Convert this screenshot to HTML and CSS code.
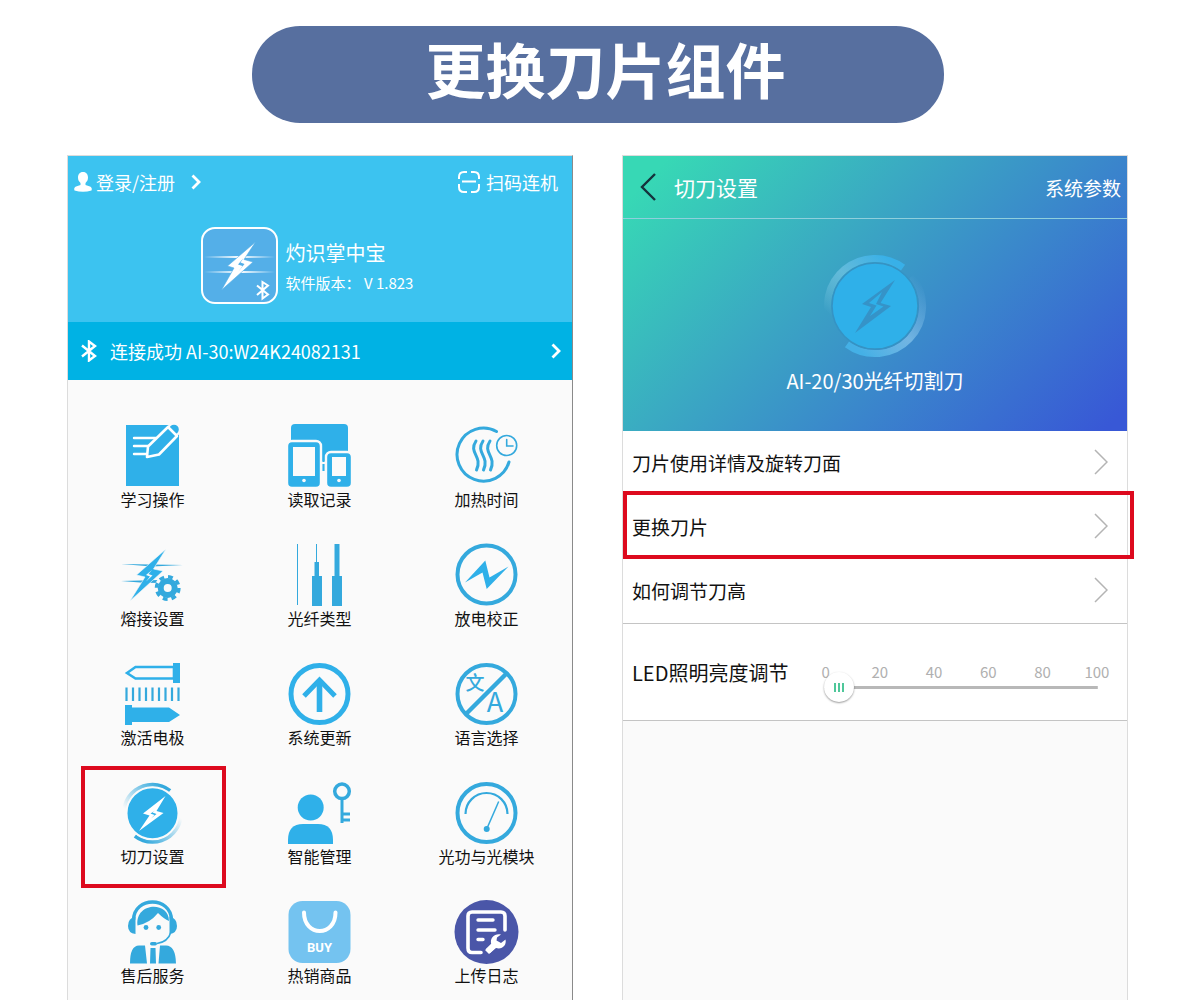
FILE: index.html
```html
<!DOCTYPE html>
<html lang="zh-CN">
<head>
  <meta charset="UTF-8" />
  <meta name="viewport" content="width=device-width, initial-scale=1.0" />
  <title>更换刀片组件</title>
  <link rel="stylesheet" href="styles.css">
</head>
<body>
  <h1 class="banner">更换刀片组件</h1>

  <main class="phones">
    <!-- Home screen -->
    <section class="phone home">
      <header class="home-head">
        <div class="top-bar">
          <button class="link-btn login">
            <svg width="18" height="20" viewBox="0 0 18 20"><path d="M9 0C5.500 0 4 2.500 4 5.500C4 8 5 9.500 6.500 11V13L2 14.500C0 15.500 0 17 .5 18.500Q9 21 17.500 18.500C18 17 18 15.500 16 14.500L11.500 13V11C13 9.500 14 8 14 5.500C14 2.500 12.500 0 9 0Z" fill="#fff"/></svg>
            <span>登录/注册</span>
            <svg class="login-arrow" width="10" height="16" viewBox="0 0 10 16"><path d="M1.500 1.500L8 8L1.500 14.500" fill="none" stroke="#fff" stroke-width="2.800"/></svg>
          </button>
          <button class="link-btn">
            <svg width="22" height="22" viewBox="0 0 22 22" fill="none" stroke="#fff" stroke-width="2"><path d="M1 8V6Q1 1 6 1H9M13 1H16Q21 1 21 6V8M21 13V16Q21 21 16 21H13M9 21H6Q1 21 1 16V13M4 10.500H18"/></svg>
            <span>扫码连机</span>
          </button>
        </div>

        <div class="app-info">
          <svg class="app-logo" width="77" height="77" viewBox="0 0 77 77">
            <defs>
              <linearGradient id="fade"><stop offset="0" stop-color="#fff" stop-opacity="0"/><stop offset=".5" stop-color="#fff"/><stop offset="1" stop-color="#fff" stop-opacity="0"/></linearGradient>
            </defs>
            <rect x="1" y="1" width="75" height="75" rx="13" fill="#54afe8" stroke="#fff" stroke-width="2"/>
            <rect x="3" y="29" width="71" height="2" fill="url(#fade)"/>
            <rect x="3" y="44" width="71" height="2" fill="url(#fade)"/>
            <path d="M54.500 15L26.500 39L33 41L20.500 63L52 35L43 32.500Z" fill="#fff" stroke="#54afe8" stroke-width=".6"/>
            <path d="M42.500 31L37 37.500L41.500 39L37 45L43.500 37L39.500 35.500Z" fill="#54afe8"/>
            <path d="M56 58.500L67 67.500L61.500 71.500V55L67 58.500L56 68" fill="none" stroke="#fff" stroke-width="2"/>
          </svg>
          <div class="app-text">
            <h2 class="app-name">灼识掌中宝</h2>
            <p class="app-version">软件版本： V 1.823</p>
          </div>
        </div>
      </header>

      <button class="connect-bar">
        <svg width="16" height="22" viewBox="0 0 16 22"><path d="M1 5.500L14 16L8 20.500V1.500L14 6L1 16.500" fill="none" stroke="#fff" stroke-width="2.400"/></svg>
        <span>连接成功 AI-30:W24K24082131</span>
        <svg class="connect-arrow" width="10" height="16" viewBox="0 0 10 16"><path d="M1.500 1.500L8 8L1.500 14.500" fill="none" stroke="#fff" stroke-width="2.800"/></svg>
      </button>

      <nav class="menu">
        <button class="menu-item">
          <svg class="icon" viewBox="0 0 65 62">
            <path d="M6 0H59V61H6Z" fill="#2fb0e9"/>
            <path d="M14 13H36M14 21H30M14 29H28" stroke="#fff" stroke-width="2.400" stroke-linecap="round"/>
            <circle cx="54" cy="4.500" r="6" fill="#2fb0e9" stroke="#fafafa" stroke-width="2.400"/>
            <path d="M48 2L57 11L39 29.500L27 32L28 21.500Z" fill="#2fb0e9" stroke="#fff" stroke-width="2.600" stroke-linejoin="round"/>
          </svg>
          <span>学习操作</span>
        </button>
        <button class="menu-item">
          <svg class="icon" viewBox="0 0 65 62">
            <path d="M8 -1H57Q61 -1 61 3V37H4V3Q4 -1 8 -1Z" fill="#2fb0e9"/>
            <path d="M33 36H41V46H33Z" fill="#fafafa"/>
            <path d="M36.500 34V37M36.500 39V46" stroke="#2fb0e9" stroke-width="2.400"/>
            <g fill="#2fb0e9" stroke="#fafafa" stroke-width="2.400">
              <rect x="0" y="16" width="34" height="47" rx="5"/>
              <rect x="39" y="27" width="26" height="36" rx="5"/>
            </g>
            <path d="M6 22H28V51H6ZM45 32H59V51H45Z" fill="#fafafa"/>
            <circle cx="17" cy="55.500" r="1.800" fill="#fafafa"/><circle cx="52" cy="55.500" r="1.800" fill="#fafafa"/>
          </svg>
          <span>读取记录</span>
        </button>
        <button class="menu-item">
          <svg class="icon" viewBox="0 0 65 62" fill="none" stroke="#34a9dd" stroke-linecap="round">
            <path d="M42.500 6.500A26.500 26.500 0 1 0 55 37" stroke-width="3"/>
            <path d="M22 16C14 28 29 31 22.500 45M29 16C21 28 36 31 29.500 45M36 16C28 28 43 31 36.500 45" stroke-width="3"/>
            <circle cx="52.700" cy="20.500" r="10" stroke-width="1.600"/>
            <path d="M52.700 14.500V21H59" stroke-width="1.600"/>
          </svg>
          <span>加热时间</span>
        </button>

        <button class="menu-item">
          <svg class="icon" viewBox="0 0 65 62">
            <path d="M1 20L32 20.500L63 21L32 22.500ZM1 37L20 36.500L38 36V39L20 38.500Z" fill="#34a9dd"/>
            <path d="M46 5L16.500 31L25 33L10 57L43 27L33.500 25Z" fill="#2fb0e9" stroke="#fafafa" stroke-width=".6"/>
            <path d="M32 26L26 31L30 32.500L26 37.500L32.500 31.500L28.500 30Z" fill="#fafafa"/>
            <circle cx="47.700" cy="44" r="13" fill="#fafafa"/>
            <circle cx="47.700" cy="44" r="11.200" fill="none" stroke="#34a9dd" stroke-width="3.500" stroke-dasharray="4.800 4"/>
            <circle cx="47.700" cy="44" r="7" fill="none" stroke="#34a9dd" stroke-width="6"/>
          </svg>
          <span>熔接设置</span>
        </button>
        <button class="menu-item">
          <svg class="icon" viewBox="0 0 65 62" fill="#34a9dd">
            <path d="M10 0H11V61H10ZM29 0H30V18H32V32H35V62H25V32H27.500V18H29ZM47.500 0H52.500V32H55V62H45V32H47.500Z"/>
          </svg>
          <span>光纤类型</span>
        </button>
        <button class="menu-item">
          <svg class="icon" viewBox="0 0 65 62">
            <circle cx="32.500" cy="30.500" r="29" fill="none" stroke="#34a9dd" stroke-width="4"/>
            <path d="M11 38.500L31.300 16.500L35.500 33.500L54.500 22.500L32.700 45L28.500 28.500Z" fill="#2fb0e9"/>
          </svg>
          <span>放电校正</span>
        </button>

        <button class="menu-item">
          <svg class="icon" viewBox="0 0 65 62" fill="#2fb0e9">
            <path d="M7 10L15.500 4H54V15.500H15.500Z" fill="none" stroke="#2fb0e9" stroke-width="2.600"/>
            <path d="M53 0H60V20H53ZM5 42H12V44.500H49L60 52L49 59H12V62H5Z"/>
            <path d="M6.500 24.500V38M13 24.500V38M19.500 24.500V38M26 24.500V38M32.500 24.500V38M39 24.500V38M45.500 24.500V38M52 24.500V38M58.500 24.500V38" stroke="#34a9dd" stroke-width="2.200"/>
          </svg>
          <span>激活电极</span>
        </button>
        <button class="menu-item">
          <svg class="icon" viewBox="0 0 65 62" fill="none" stroke="#2fb0e9">
            <circle cx="32.500" cy="31" r="28.500" stroke-width="5"/>
            <path d="M32.500 49V18" stroke-width="5.600"/>
            <path d="M17 33L32.500 17L48 33" stroke-width="5"/>
          </svg>
          <span>系统更新</span>
        </button>
        <button class="menu-item">
          <svg class="icon" viewBox="0 0 65 62">
            <circle cx="32.500" cy="31" r="29" fill="none" stroke="#34a9dd" stroke-width="4"/>
            <path d="M52 11L12 51" stroke="#34a9dd" stroke-width="4.500"/>
            <text class="lang-zh" x="21" y="27" text-anchor="middle">文</text>
            <text class="lang-en" x="41" y="49" text-anchor="middle">A</text>
          </svg>
          <span>语言选择</span>
        </button>

        <button class="menu-item marked">
          <svg class="icon" viewBox="0 0 65 62">
            <defs>
              <linearGradient id="arcTop" x1="0" y1="1" x2="1" y2="0"><stop offset=".2" stop-color="#34a9dd" stop-opacity="0"/><stop offset=".9" stop-color="#34a9dd"/></linearGradient>
              <linearGradient id="arcBottom" x1="0" y1="1" x2="1" y2="0"><stop offset=".1" stop-color="#34a9dd"/><stop offset=".8" stop-color="#34a9dd" stop-opacity="0"/></linearGradient>
            </defs>
            <path d="M6 41.900A28.500 28.500 0 0 1 50 8.800" fill="none" stroke="url(#arcTop)" stroke-width="4"/>
            <path d="M15 53.800A28.500 28.500 0 0 0 59 20.800" fill="none" stroke="url(#arcBottom)" stroke-width="4"/>
            <circle cx="32.500" cy="31.300" r="26" fill="#2fb0e9" stroke="#fafafa" stroke-width="2"/>
            <path d="M45.500 14L23 31.500L29.500 33.500L19 49L43.500 31L36.500 29Z" fill="#fff"/>
            <path d="M35 28.500L30.500 31.500L34.500 33L31 36.500L36.500 32L32.500 30.500Z" fill="#2fb0e9"/>
          </svg>
          <span>切刀设置</span>
        </button>
        <button class="menu-item">
          <svg class="icon" viewBox="0 0 65 62" fill="#2fb0e9">
            <circle cx="23.700" cy="25.500" r="13"/>
            <path d="M1 62V58Q1 42 16 42H31Q46 42 46 58V62Z"/>
            <g fill="none" stroke="#34a9dd">
              <circle cx="55" cy="9.300" r="7.300" stroke-width="3.500"/>
              <path d="M55 17V41M55 32H63M55 38H63" stroke-width="3"/>
            </g>
          </svg>
          <span>智能管理</span>
        </button>
        <button class="menu-item">
          <svg class="icon" viewBox="0 0 65 62" fill="none" stroke="#34a9dd">
            <circle cx="32.500" cy="31" r="29" stroke-width="4"/>
            <path d="M11.500 32A21 21 0 0 1 53.500 32" stroke-width="2.200"/>
            <path d="M32.700 47L44.700 19.500" stroke-width="1.500"/>
            <circle cx="32.700" cy="47" r="3" fill="#34a9dd" stroke="none"/>
          </svg>
          <span>光功与光模块</span>
        </button>

        <button class="menu-item">
          <svg class="icon" viewBox="0 0 65 62" fill="#34a9dd">
            <path d="M13.500 19C14 -5 51 -5 51.500 19" fill="none" stroke="#34a9dd" stroke-width="3.400"/>
            <path d="M15.500 15.500V33Q8 32 8 25Q8 17 15.500 15.500ZM49.500 15.500V33Q57 32 57 25Q57 17 49.500 15.500Z"/>
            <path d="M17.500 24.500C15 1 49 0 49 20Q44 18 38 12Q30 22 17.500 24.500Z"/>
            <circle cx="26" cy="26.500" r="2.400"/><circle cx="38.700" cy="26.500" r="2.400"/>
            <path d="M51 31Q48 41 37 42.500" fill="none" stroke="#34a9dd" stroke-width="1.600"/>
            <rect x="30" y="41" width="7" height="3.600" rx="1.800"/>
            <path d="M10 62.500Q10 44.500 19 44.500H25L27 62.500ZM38.500 62.500L40 44.500H46Q55.500 44.500 56 62.500ZM30.500 47H35.500L36 62.500H30Z"/>
          </svg>
          <span>售后服务</span>
        </button>
        <button class="menu-item">
          <svg class="icon" viewBox="0 0 65 62">
            <rect x="1.500" y="0" width="62" height="62" rx="14" fill="#74c3f0"/>
            <path d="M17 11.500C17 36 48.500 36 48.500 11.500" fill="none" stroke="#fff" stroke-width="4" stroke-linecap="round"/>
            <text class="buy" x="32.500" y="51" text-anchor="middle">BUY</text>
          </svg>
          <span>热销商品</span>
        </button>
        <button class="menu-item">
          <svg class="icon" viewBox="0 0 65 62">
            <circle cx="32.500" cy="31" r="32" fill="#4a56a8"/>
            <g fill="none" stroke="#fff" stroke-width="3.600" stroke-linecap="round">
              <path d="M51 29V15Q51 11 47 11H18Q14 11 14 15V47Q14 51.500 18 51.500H27"/>
              <path d="M24 19H39M24 29H41M24 38.500H29" stroke-width="3.400"/>
              <path d="M34 50L41 43" stroke-width="6" stroke-linecap="butt"/>
            </g>
            <path d="M47 33.500C41 32 35 37 37.500 43.500L31 49L35 53L42 47C48 49 53 44 51.500 38.500L47 42L42.500 39.500L43 36.500Z" fill="#fff"/>
          </svg>
          <span>上传日志</span>
        </button>
      </nav>
    </section>

    <!-- Cleaver settings screen -->
    <section class="phone settings">
      <header class="hero">
        <div class="title-bar">
          <button class="back" aria-label="返回">
            <svg width="16" height="28" viewBox="0 0 16 28"><path d="M15 1L2 14L15 27" fill="none" stroke="#15333c" stroke-width="2.400"/></svg>
          </button>
          <h2>切刀设置</h2>
          <button class="params">系统参数</button>
        </div>
        <div class="device">
          <svg width="104" height="104" viewBox="0 0 104 104">
            <defs>
              <linearGradient id="ringTop" x1="0" y1="1" x2="1" y2="0"><stop offset=".1" stop-color="#8ccfe8" stop-opacity="0"/><stop offset=".5" stop-color="#6cc0e0" stop-opacity=".8"/><stop offset=".9" stop-color="#38b0e8"/></linearGradient>
              <linearGradient id="ringBottom" x1="0" y1="1" x2="1" y2="0"><stop offset=".1" stop-color="#44b0e6"/><stop offset=".5" stop-color="#80bfe8" stop-opacity=".8"/><stop offset=".95" stop-color="#80bfe8" stop-opacity="0"/></linearGradient>
            </defs>
            <path d="M9 72.200A47.500 47.500 0 0 1 80 13.600" fill="none" stroke="url(#ringTop)" stroke-width="7"/>
            <path d="M24 90.400A47.500 47.500 0 0 0 89 22.200" fill="none" stroke="url(#ringBottom)" stroke-width="7"/>
            <circle cx="52" cy="52" r="43" fill="#2fb0e9" stroke="#3593c4" stroke-width="1.500"/>
            <path d="M72 26L39 50L48 53L32 79L68 52L57.500 49Z" fill="#3593c8"/>
            <path d="M59 38L46 49L53.500 51.500L47 62L60.500 52.500L53 50Z" fill="#2fb0e9"/>
          </svg>
          <p>AI-20/30光纤切割刀</p>
        </div>
      </header>

      <div class="rows">
        <button class="row">
          <span>刀片使用详情及旋转刀面</span>
          <svg class="row-arrow" viewBox="0 0 14 26"><path d="M1 1L13 13L1 25"/></svg>
        </button>
        <button class="row marked">
          <span>更换刀片</span>
          <svg class="row-arrow" viewBox="0 0 14 26"><path d="M1 1L13 13L1 25"/></svg>
        </button>
        <button class="row">
          <span>如何调节刀高</span>
          <svg class="row-arrow" viewBox="0 0 14 26"><path d="M1 1L13 13L1 25"/></svg>
        </button>
      </div>

      <div class="led">
        <label for="led-level">LED照明亮度调节</label>
        <div class="slider">
          <div class="scale">
            <span>0</span><span>20</span><span>40</span><span>60</span><span>80</span><span>100</span>
          </div>
          <input type="range" id="led-level" min="0" max="100" value="0">
        </div>
      </div>
    </section>
  </main>
</body>
</html>
```
FILE: styles.css
```css
* {
  box-sizing: border-box;
  margin: 0;
  padding: 0;
}

body {
  display: flex;
  flex-direction: column;
  min-height: 100vh;
  padding: 26px 72px 0 67px;
  font-family: 'Noto Sans CJK SC', sans-serif;
  background: #fff;
  color: #111;
}

button {
  font: inherit;
  color: inherit;
  background: none;
  border: none;
  cursor: pointer;
}

.banner {
  width: 100%;
  max-width: 692px;
  margin: 0 auto 32px;
  padding: 0 0 13px 16px;
  border-radius: 48px;
  background: #576f9f;
  color: #fff;
  font-size: 60px;
  line-height: 84px;
  text-align: center;
}

.phones {
  flex: 1;
  display: grid;
  grid-template-columns: 1fr 1fr;
  gap: 49px;
}

.phone {
  border: 1px solid #dcdcdc;
  border-bottom: none;
  background: #fafafa;
}

/* === HOME SCREEN === */
.home {
  border-right-color: #8a8a8a;
}

.home-head {
  padding-bottom: 18px;
  background: #3cc3f0;
  color: #fff;
}

.top-bar {
  display: flex;
  justify-content: space-between;
  padding: 12px 14px 0 6px;
  font-size: 18px;
  line-height: 28px;
}

.link-btn {
  display: flex;
  align-items: center;
  gap: 6px;
}

.login {
  gap: 4px;
}

.login-arrow {
  margin-left: 12px;
}

.app-info {
  display: flex;
  align-items: center;
  justify-content: center;
  gap: 8px;
  padding: 31px 26px 0 0;
}

.app-text {
  padding-top: 4px;
}

.app-name {
  font-size: 20px;
  font-weight: 400;
  line-height: 30px;
}

.app-version {
  font-size: 15px;
  line-height: 30px;
}

.connect-bar {
  display: flex;
  align-items: center;
  gap: 13px;
  width: 100%;
  padding: 0 11px 0 13px;
  background: #00b2e4;
  color: #fff;
  font-size: 18px;
  line-height: 58px;
}

.connect-arrow {
  margin-left: auto;
}

.menu {
  display: grid;
  grid-template-columns: repeat(3, 1fr);
  row-gap: 33px;
  padding: 45px 2px 12px 1px;
}

.menu-item {
  position: relative;
  display: flex;
  flex-direction: column;
  align-items: center;
  font-size: 16px;
  line-height: 24px;
}

.icon {
  width: 65px;
  height: 62px;
  overflow: visible;
}

.lang-zh {
  fill: #34a9dd;
  font-size: 19px;
  font-weight: 500;
}

.lang-en {
  fill: #34a9dd;
  font-size: 27px;
}

.buy {
  fill: #fff;
  font-family: Roboto, sans-serif;
  font-size: 13px;
  font-weight: 700;
}

/* red frame round the highlighted entry */
.marked::after {
  content: "";
  position: absolute;
  border: 4px solid #dd0a1e;
}

.menu-item.marked::after {
  top: -16px;
  right: 10px;
  bottom: -20px;
  left: 12px;
}

/* === SETTINGS SCREEN === */
.hero {
  height: 275px;
  background: linear-gradient(135deg, #37d8b5 6%, #3aabc2 37%, #3a84cc 65%, #3858d6 97%);
  color: #fff;
}

.title-bar {
  display: flex;
  align-items: center;
  height: 63px;
  padding: 0 6px 0 17px;
  border-bottom: 1px solid #8fcfdc;
}

.back {
  display: flex;
}

.title-bar h2 {
  margin-left: 18px;
  font-size: 21px;
  font-weight: 400;
}

.params {
  margin-left: auto;
  font-size: 19px;
}

.device {
  padding-top: 35px;
  text-align: center;
  font-size: 20px;
  line-height: 30px;
}

.device svg {
  display: block;
  margin: 0 auto 8px;
}

.rows {
  border-bottom: 1px solid #c4c4c4;
  background: #fff;
}

.row {
  position: relative;
  display: flex;
  align-items: center;
  justify-content: space-between;
  width: 100%;
  height: 64px;
  padding: 0 19px 2px 9px;
  font-size: 19px;
}

.row-arrow {
  width: 14px;
  height: 26px;
  fill: none;
  stroke: #b4b4b4;
  stroke-width: 1.5;
}

.row.marked::after {
  top: -4px;
  right: -7px;
  bottom: 0;
  left: 0;
}

/* === LED SLIDER === */
.led {
  display: flex;
  align-items: center;
  gap: 10px;
  height: 97px;
  padding: 0 3px 0 9px;
  border-bottom: 1px solid #c4c4c4;
  background: #fff;
  font-size: 20px;
}

.slider {
  flex: 1;
  padding-top: 20px;
}

.scale {
  display: grid;
  grid-template-columns: repeat(6, 1fr);
  color: #b0b0b0;
  font-size: 15px;
  line-height: 20px;
  text-align: center;
}

.slider input {
  -webkit-appearance: none;
  appearance: none;
  display: block;
  width: calc(100% - 52px);
  height: 30px;
  margin: -10px auto 0;
  background: linear-gradient(#b8b8b8, #b8b8b8) center / 100% 3px no-repeat;
}

.slider input::-webkit-slider-thumb {
  -webkit-appearance: none;
  width: 30px;
  height: 30px;
  border-radius: 50%;
  background:
    linear-gradient(#4fc79a, #4fc79a) 10px center / 2px 9px no-repeat,
    linear-gradient(#4fc79a, #4fc79a) 14px center / 2px 9px no-repeat,
    linear-gradient(#4fc79a, #4fc79a) 18px center / 2px 9px no-repeat,
    #fff;
  box-shadow: 0 1px 2px rgba(0, 0, 0, 0.4);
}
```
